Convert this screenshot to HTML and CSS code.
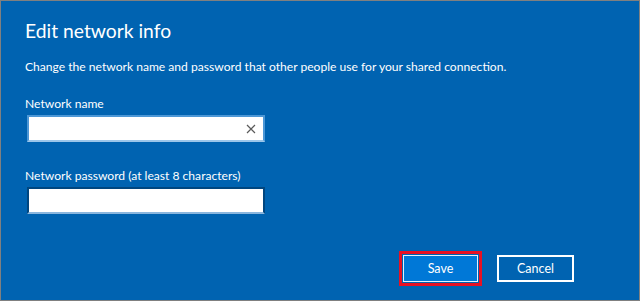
FILE: index.html
```html
<!DOCTYPE html>
<html lang="en">
<head>
    <meta charset="UTF-8">
    <meta name="viewport" content="width=device-width, initial-scale=1.0">
    <title>Edit network info</title>
    <link rel="stylesheet" href="styles.css">
</head>
<body>
    <div class="dialog">
        <h1>Edit network info</h1>
        <p class="desc">Change the network name and password that other people use for your shared connection.</p>

        <div class="field">
            <label for="netName">Network name</label>
            <div class="input-box focused">
                <input type="text" id="netName">
                <span class="clear">
                    <svg width="10" height="10" viewBox="0 0 10 10"><path d="M1 1L9 9M9 1L1 9" stroke="#5a5a5a" stroke-width="1.2" fill="none"/></svg>
                </span>
            </div>
        </div>

        <div class="field">
            <label for="netPass">Network password (at least 8 characters)</label>
            <div class="input-box">
                <input type="password" id="netPass">
            </div>
        </div>

        <div class="actions">
            <div class="highlight">
                <button class="btn primary">Save</button>
            </div>
            <button class="btn">Cancel</button>
        </div>
    </div>
</body>
</html>
```

FILE: styles.css
```css
html, body {
    margin: 0;
    padding: 0;
}
body {
    font-family: Lato, "Noto Sans", sans-serif;
    color: #fff;
}
.dialog {
    width: 640px;
    height: 301px;
    box-sizing: border-box;
    border: 1px solid #808080;
    background-color: #0063b1;
    padding: 16px 24px 0 24px;
    display: flex;
    flex-direction: column;
}
h1 {
    margin: 0;
    font-size: 19.3px;
    font-weight: normal;
    line-height: 28px;
}
.desc {
    margin: 13px 0 0;
    font-size: 12.1px;
    line-height: 18px;
}
.field {
    margin-top: 19px;
}
.field + .field {
    margin-top: 25px;
}
label {
    display: block;
    font-size: 12.1px;
    line-height: 18px;
    margin-bottom: 2px;
}
.input-box {
    width: 238px;
    height: 27px;
    margin-left: 2px;
    box-sizing: border-box;
    background: #fff;
    border: 2px solid #00467f;
    border-bottom-color: #8ab6de;
    display: flex;
    align-items: center;
}
.input-box.focused {
    border-color: #4c97d6;
    border-bottom-color: #9cc6ea;
}
.input-box input {
    flex: 1;
    min-width: 0;
    border: none;
    outline: none;
    padding: 0 6px;
    font-family: inherit;
    font-size: 13px;
    background: transparent;
}
.clear {
    width: 24px;
    display: flex;
    justify-content: center;
    align-items: center;
}
.clear svg {
    display: block;
}
.actions {
    margin-top: auto;
    margin-bottom: 14px;
    display: flex;
    justify-content: flex-end;
    align-items: center;
    gap: 15px;
    padding-right: 41px;
}
.highlight {
    border: 3px solid #e81123;
    padding: 1px;
}
.btn {
    width: 77px;
    height: 27px;
    box-sizing: border-box;
    font-family: inherit;
    font-size: 12.5px;
    color: #fff;
    background: transparent;
    border: 2px solid #fff;
    padding: 0;
    cursor: pointer;
}
.btn.primary {
    width: 75px;
    background-color: #0078d7;
    border: 1px solid #e6f0fa;
}
```
